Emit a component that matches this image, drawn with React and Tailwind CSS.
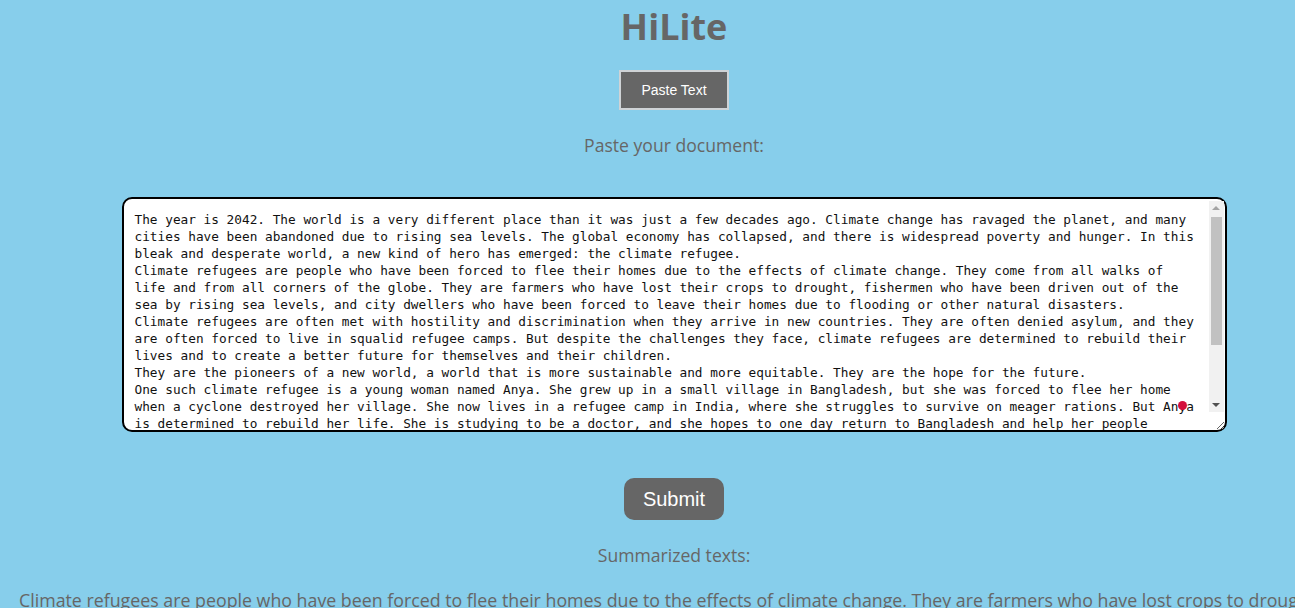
import { useState } from 'react';

const DOC = `The year is 2042. The world is a very different place than it was just a few decades ago. Climate change has ravaged the planet, and many cities have been abandoned due to rising sea levels. The global economy has collapsed, and there is widespread poverty and hunger. In this bleak and desperate world, a new kind of hero has emerged: the climate refugee.
Climate refugees are people who have been forced to flee their homes due to the effects of climate change. They come from all walks of life and from all corners of the globe. They are farmers who have lost their crops to drought, fishermen who have been driven out of the sea by rising sea levels, and city dwellers who have been forced to leave their homes due to flooding or other natural disasters.
Climate refugees are often met with hostility and discrimination when they arrive in new countries. They are often denied asylum, and they are often forced to live in squalid refugee camps. But despite the challenges they face, climate refugees are determined to rebuild their lives and to create a better future for themselves and their children.
They are the pioneers of a new world, a world that is more sustainable and more equitable. They are the hope for the future.
One such climate refugee is a young woman named Anya. She grew up in a small village in Bangladesh, but she was forced to flee her home when a cyclone destroyed her village. She now lives in a refugee camp in India, where she struggles to survive on meager rations. But Anya is determined to rebuild her life. She is studying to be a doctor, and she hopes to one day return to Bangladesh and help her people rebuild their lives.
Anya is just one of millions of climate refugees around the world. They are the faces of a changing planet, and their stories remind us that the climate crisis is not a distant threat but a present reality.
The world must come together to support climate refugees. We must provide them with safe places to live, access to education and health care, and the chance to build new lives. Only then can we hope to create a future that is fair for everyone.`;

const SUMMARY =
  'Climate refugees are people who have been forced to flee their homes due to the effects of climate change. They are farmers who have lost crops to drought, fishermen driven out of the sea by rising sea levels, and city dwellers forced to leave their homes.';

export default function App() {
  const [text, setText] = useState(DOC);

  return (
    <div className="min-h-[608px] w-full overflow-hidden bg-[#87ceeb]">
      <div className="w-[1348px] flex flex-col items-center font-['Open_Sans',sans-serif] text-[#666]">
        <h1 className="mt-[3px] text-[36px] font-bold leading-[48px]">HiLite</h1>

        <button className="mt-[19px] h-[40px] w-[110px] border-2 border-[#cfd3d6] bg-[#666] pt-[1px] font-['Liberation_Sans',Arial,sans-serif] text-[14px] text-white">
          Paste Text
        </button>

        <p className="mt-[22px] text-[17.6px] leading-[26px]">Paste your document:</p>

        <div className="relative mt-[39px]">
          <textarea
            value={text}
            onChange={(e) => setText(e.target.value)}
            spellCheck={false}
            className="block h-[235px] w-[1105px] resize-y overflow-hidden rounded-[10px] border-2 border-black bg-white py-[12px] pl-[11px] pr-[24px] font-['DejaVu_Sans_Mono',monospace] text-[12.75px] leading-[17px] text-[#111] outline-none [scrollbar-width:none]"
          />
          {/* fake scrollbar */}
          <div className="pointer-events-none absolute left-[1087px] top-[4px] flex h-[211px] w-[15px] flex-col bg-[#f1f1f1]">
            <div className="flex h-[14px] items-center justify-center">
              <span className="h-0 w-0 border-x-[4px] border-b-[4px] border-x-transparent border-b-[#a3a3a3]" />
            </div>
            <div className="mx-[2px] mt-[2px] h-[128px] bg-[#c1c1c1]" />
            <div className="flex-1" />
            <div className="flex h-[14px] items-center justify-center">
              <span className="h-0 w-0 border-x-[4px] border-t-[4px] border-x-transparent border-t-[#505050]" />
            </div>
          </div>
          <span className="absolute left-[1056px] top-[204px] h-[9px] w-[9px] rounded-full bg-[#d4103c]" />
        </div>

        <button className="mt-[46px] h-[42px] w-[100px] rounded-[10px] bg-[#666] font-['Liberation_Sans',Arial,sans-serif] text-[20px] text-white">
          Submit
        </button>

        <p className="mt-[22px] text-[17.6px] leading-[26px]">Summarized texts:</p>
      </div>

      <p className="mt-[19px] whitespace-nowrap pl-[19px] font-['Open_Sans',sans-serif] text-[17.8px] leading-[26px] text-[#666]">
        {SUMMARY}
      </p>
    </div>
  );
}
